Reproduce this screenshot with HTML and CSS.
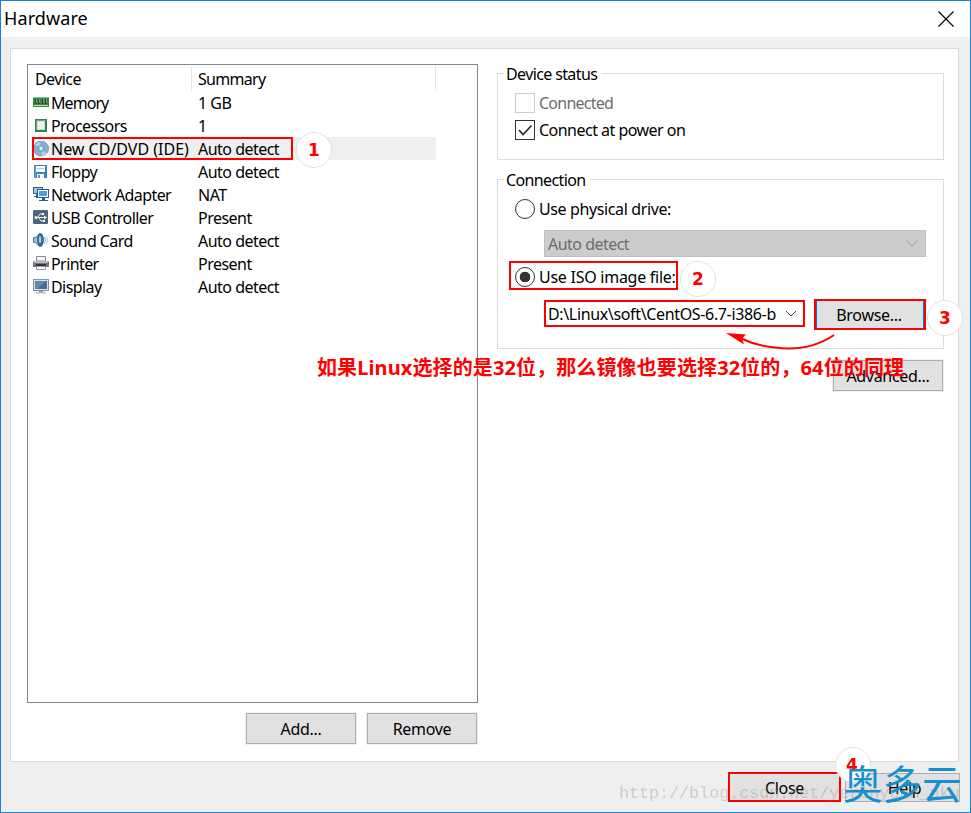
FILE: index.html
```html
<!DOCTYPE html>
<html lang="zh-CN">
<head>
<meta charset="utf-8">
<title>Hardware</title>
<link rel="stylesheet" href="styles.css">
</head>
<body>
<div class="window">
  <header class="titlebar">
    <h1>Hardware</h1>
    <svg class="close-icon" width="16" height="16" viewBox="0 0 16 16"><path d="M.5 .5l15 15M15.500 .5l-15 15"/></svg>
  </header>
  <main class="panel">
    <section class="left">
      <div class="list">
        <div class="row head"><span class="name">Device</span><span class="value">Summary</span></div>
        <div class="row">
          <svg class="icon" viewBox="0 0 16 16"><path fill="#2f8b45" d="M0 2h16v10H0z"/><path fill="#8cc598" d="M0 2h16v1H0z"/><path fill="#343c39" d="M2 4h2v5H2zM5 4h2v5H5zM9 4h2v5H9zM12 4h2v5h-2z"/><path fill="#8b9690" d="M3 4h1v4H3zM6 4h1v4H6zM10 4h1v4h-1zM13 4h1v4h-1z"/><path stroke="#dfd58a" d="M1 10.500h14"/></svg>
          <span class="name tight">Memory</span><span class="value">1 GB</span></div>
        <div class="row">
          <svg class="icon" viewBox="0 0 16 16"><path fill="#2e864b" d="M2 1h12v13H2z"/><path fill="#68aa7b" d="M3 2h10v1H4v9H3z"/><path fill="#d4d8d4" d="M4 3h8v9H4z"/><path fill="#f1f2ef" d="M5 4h6v7H5z"/></svg>
          <span class="name">Processors</span><span class="value">1</span></div>
        <div class="row selected">
          <svg class="icon" viewBox="0 0 16 16"><circle cx="8" cy="7.500" r="7.500" fill="#8ab0d0" stroke="#789cbc"/><path fill="#b4cfe4" d="M8 7.500L2 3.500A7 7 0 0 1 7 1zM8 8l6 4.500A7 7 0 0 1 9 15z"/><circle cx="8" cy="7.500" r="3" fill="#a8c7de" stroke="#6d9bc0"/><circle cx="8" cy="7.500" r="1.200" fill="#fff"/></svg>
          <span class="name wide">New CD/DVD (IDE)</span><span class="value">Auto detect</span></div>
        <div class="row">
          <svg class="icon" viewBox="0 0 16 16"><path fill="#3481cf" d="M1 1h13v13H2l-1-1z"/><path fill="#68a5df" d="M2 2h11v1H2zM2 3h1v10H2z"/><path fill="#fff" d="M3 2h9v6H3zM4 10h7v4H4z"/><path fill="#a9cbea" d="M4 4h7v1H4z"/><path fill="#5b91c7" d="M5 11h2v3H5z"/></svg>
          <span class="name">Floppy</span><span class="value">Auto detect</span></div>
        <div class="row">
          <svg class="icon" viewBox="0 0 16 16"><path fill="#2c6394" d="M0 0h10v7H0zM3 7h2v4H3z"/><path fill="#9cc9ea" d="M1 1h8v5H1z"/><path fill="#285f91" d="M1 9h4v1H1zM4 2h12v9H4z"/><path fill="#fff" d="M5 3h10v7H5z"/><path fill="#4ea0df" d="M6 4h8v5H6z"/><path fill="#285f91" d="M9 11h3v2H9zM6 13h9v1H6z"/></svg>
          <span class="name">Network Adapter</span><span class="value">NAT</span></div>
        <div class="row">
          <svg class="icon" viewBox="0 0 16 16"><rect width="15" height="14" rx="1" fill="#4c657d"/><g stroke="#e8edf2" fill="none"><path d="M2 7.500h10M5 7l2-3h3M6 8l2 3h3"/></g><path fill="#fff" d="M11 5.500l3 2-3 2zM9 3h2v2H9zM10 10h2v2h-2z"/><circle cx="3" cy="7.500" r="1.500" fill="#fff"/></svg>
          <span class="name">USB Controller</span><span class="value">Present</span></div>
        <div class="row">
          <svg class="icon" viewBox="0 0 16 16"><path fill="#aeb9c4" stroke="#61778d" d="M.5 4.500h2L7 .5v13l-4.500-4h-2z"/><ellipse cx="7.500" cy="7" rx="2.800" ry="6.500" fill="#2772a9" stroke="#315776"/><ellipse cx="7" cy="6.500" rx="1.200" ry="3.500" fill="#9dd1ef"/><g fill="none" stroke="#6da9d8"><path d="M11.500 4q2 3 0 6.500"/><path stroke="#b2cee5" d="M13.500 2.500q2.500 4.500 0 9"/></g></svg>
          <span class="name">Sound Card</span><span class="value">Auto detect</span></div>
        <div class="row">
          <svg class="icon" viewBox="0 0 16 16"><path fill="#f5f5fa" stroke="#888795" d="M3.500 .5h9V5h-9z"/><path fill="#777681" d="M1 5h14l1 1v5H0V6z"/><path fill="#b9b8c2" d="M1 5h14v2H1z"/><path fill="#34343d" d="M3 8h10v2H3z"/><path fill="#fff" stroke="#9696a2" d="M3.500 10.500h9v3h-9z"/></svg>
          <span class="name">Printer</span><span class="value">Present</span></div>
        <div class="row">
          <svg class="icon" viewBox="0 0 16 16"><path fill="#8193a5" d="M0 0h16v12H0z"/><path fill="#d5e0e9" d="M1 1h14v10H1z"/><path fill="#486f92" d="M2 2h12v8H2z"/><path fill="#6488a7" d="M2 2h11l-9 8H2z"/><path fill="#8797a5" d="M6 12h4v1H6z"/><path fill="#b1bbc4" d="M3 13h10v1.500H3z"/></svg>
          <span class="name">Display</span><span class="value">Auto detect</span></div>
      </div>
      <div class="actions"><button>Add...</button><button>Remove</button></div>
    </section>
    <section class="right">
      <div class="group status">
        <h2><span>Device status</span></h2>
        <label class="option disabled"><span class="check"></span><span>Connected</span></label>
        <label class="option"><span class="check"><svg width="18" height="18" viewBox="0 0 18 18"><path d="M3 9l4 4.500L15.500 4.500"/></svg></span><span>Connect at power on</span></label>
      </div>
      <div class="group connection">
        <h2><span>Connection</span></h2>
        <label class="option physical"><span class="radio"></span><span>Use physical drive:</span></label>
        <div class="select off"><span>Auto detect</span><svg width="12" height="8" viewBox="0 0 12 8"><path d="M1 1l5 5 5-5"/></svg></div>
        <label class="option iso marked"><span class="radio on"></span><span>Use ISO image file:</span></label>
        <div class="file">
          <div class="select path marked"><span>D:\Linux\soft\CentOS-6.7-i386-b</span><svg width="12" height="8" viewBox="0 0 12 8"><path d="M1 1l5 5 5-5"/></svg></div>
          <button class="browse marked">Browse...</button>
        </div>
      </div>
      <button class="advanced">Advanced...</button>
    </section>
  </main>
  <footer class="footer"><button class="close marked">Close</button><button class="help">Help</button></footer>

  <div class="outline"></div>
  <b class="step one">1</b><b class="step two">2</b><b class="step three">3</b><b class="step four">4</b>
  <svg class="arrow" width="112" height="26" viewBox="0 0 112 26"><path class="curve" d="M108 3Q83 20 49 15.500Q31 14 14 6"/><path class="tip" d="M0 1l20 1.500-4 4 2 6z"/></svg>
  <p class="note">如果Linux选择的是32位，那么镜像也要选择32位的，64位的同理</p>
  <span class="url">http://blog.csdn.net/yerenyuan_pku</span>
  <span class="brand">奥多云</span>
</div>
</body>
</html>
```
FILE: styles.css
```css
* { box-sizing: border-box; }
body { margin: 0; font: 16px/22px "Noto Sans", "Noto Sans CJK SC", sans-serif; letter-spacing: -.52px; color: #000; }
h1, h2, p { margin: 0; font-weight: normal; }
.window { position: relative; width: 971px; height: 813px; border: 1px solid #1883d7; background: #efefef; overflow: hidden; }
.titlebar { display: flex; justify-content: space-between; align-items: center; height: 36px; padding: 0 16px 0 3px; background: #fff; }
h1 { font-size: 18px; line-height: 32px; letter-spacing: .1px; margin-top: -2px; }
.close-icon { fill: none; stroke: #000; stroke-width: 1.1; margin-top: -1px; }
.panel { display: flex; justify-content: space-between; width: 949px; height: 714px; margin: 11px 0 0 9px; padding: 15px 14px 0 16px; border: 1px solid #dadada; background: #fff; }
.left { width: 451px; }
.list { height: 639px; border: 1px solid #828790; background: #fff; }
.row { display: flex; align-items: center; width: 408px; height: 23px; padding-left: 5px; white-space: nowrap; }
.row .name { width: 149px; padding-left: 2px; letter-spacing: -.58px; }
.row .name.tight { letter-spacing: -.95px; }
.row .name.wide { letter-spacing: 0; }
.icon { width: 16px; height: 16px; flex: none; }
.row.head { height: 26px; padding: 1px 0 0; }
.head span { height: 25px; line-height: 26px; border-right: 1px solid #e5e5e5; }
.row.head .name { width: 164px; padding-left: 7px; }
.row.head .value { width: 244px; padding-left: 6px; letter-spacing: -.7px; }
.selected { background: linear-gradient(90deg, #fff 21px, #efefef 21px); }
button { height: 31px; width: 110px; padding: 0; border: 1px solid #adadad; background: #e1e1e1; font: inherit; letter-spacing: -.3px; color: #000; box-shadow: 0 0 0 1px #f0f0f0; }
.actions { display: flex; justify-content: flex-end; gap: 11px; padding: 10px 1px 0 0; }
.right { display: flex; flex-direction: column; align-items: flex-end; padding-top: 9px; }
.group { width: 447px; border: 1px solid #dcdcdc; padding-left: 17px; }
.group h2 { height: 22px; margin: -11px 0 0 -11px; font-size: 16px; line-height: 22px; letter-spacing: -.62px; }
.group h2 span { display: inline-block; padding: 0 4px 0 2px; background: #fff; }
.status { height: 87px; }
.connection { height: 170px; margin-top: 19px; }
.option { display: flex; align-items: center; height: 27px; gap: 4px; white-space: nowrap; }
.status h2 { margin-bottom: 4px; }
.disabled { color: #6d6d6d; letter-spacing: -.75px; }
.check { width: 20px; height: 20px; flex: none; border: 1px solid #333; }
.disabled .check { border-color: #ccc; }
.check svg { display: block; fill: none; stroke: #222; stroke-width: 1.6; }
.connection .option { height: 30px; margin-top: 3px; }
.connection .physical { letter-spacing: -.38px; }
.radio { width: 20px; height: 20px; flex: none; border: 1px solid #333; border-radius: 50%; }
.radio.on { background: radial-gradient(circle, #333 5px, #fff 5.6px); }
.select { display: flex; justify-content: space-between; align-items: center; margin-left: 29px; padding: 0 7px 0 3px; white-space: nowrap; }
.select svg { flex: none; fill: none; stroke: #444; }
.off { width: 382px; height: 27px; margin-top: 6px; border: 1px solid #bfbfbf; background: #ccc; color: #6d6d6d; }
.off svg { stroke: #999; }
.marked { border: 2px solid #f00; }
.connection .iso { width: 169px; height: 29px; margin: 4px 0 0 -6px; padding: 2px 0 0 4px; letter-spacing: -.26px; }
.file { display: flex; margin-top: 9px; }
.path { width: 261px; height: 27px; margin-top: 1px; padding-left: 2px; padding-right: 6px; }
.path span { letter-spacing: -.35px; }
.browse { width: 112px; height: 31px; margin-left: 9px; padding-right: 2px; border-color: #f00; box-shadow: inset 1px 0 #0078d7, inset -1px 0 #0078d7; }
.advanced { margin: 11px 1px 0 0; }
.footer { display: flex; justify-content: flex-end; gap: 4px; padding: 10px 10px 0 0; }
.footer .close { width: 113px; height: 30px; padding-top: 1px; box-shadow: none; }
.footer .help { width: 115px; height: 29px; margin-top: 1px; padding: 1px 0 0 4px; box-shadow: none; }
.outline { position: absolute; left: 31px; top: 136px; width: 261px; height: 23px; border: 2px solid #f00; }
.step { position: absolute; width: 36px; height: 36px; border: 1px solid #e1e1e1; border-radius: 50%; background: #fff; color: #f00; font: bold 17px/34px "DejaVu Sans", sans-serif; letter-spacing: 0; text-align: center; }
.one { left: 295px; top: 131px; }
.two { left: 679px; top: 260px; }
.three { left: 926px; top: 299px; }
.four { left: 834px; top: 746px; padding-right: 2px; }
.arrow { position: absolute; left: 725px; top: 331px; }
.curve { fill: none; stroke: #f00; stroke-width: 2; }
.tip { fill: #f00; }
.note { position: absolute; left: 316px; top: 353px; color: #f00; font: bold 20px/28px "Noto Sans", "Noto Sans CJK SC", sans-serif; letter-spacing: .11px; white-space: nowrap; }
.url { position: absolute; left: 618px; top: 782px; color: rgba(130, 130, 115, .32); font: 16.7px/22px "Liberation Mono", monospace; letter-spacing: 0; }
.brand { position: absolute; left: 842px; top: 754px; color: #148fcf; font: 39.500px/54px "Noto Sans CJK SC", sans-serif; letter-spacing: 0; white-space: nowrap; }
```
